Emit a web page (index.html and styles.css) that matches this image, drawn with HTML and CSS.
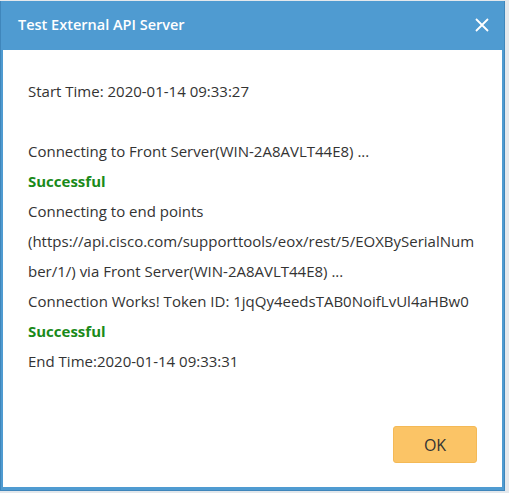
FILE: index.html
```html
<!DOCTYPE html>
<html>
<head>
<meta charset="utf-8">
<link rel="stylesheet" href="styles.css">
</head>
<body>
<div class="dialog">
  <div class="dialog-header">
    <span class="dialog-title">Test External API Server</span>
    <svg class="close" width="14" height="14" viewBox="0 0 14 14"><path d="M1 1L13 13M13 1L1 13" stroke="#fff" stroke-width="1.8" fill="none"/></svg>
  </div>
  <div class="dialog-body">
    <div class="log">
      <div class="line">Start Time: 2020-01-14 09:33:27</div>
      <div class="line">&nbsp;</div>
      <div class="line">Connecting to Front Server(WIN-2A8AVLT44E8) ...</div>
      <div class="line ok">Successful</div>
      <div class="line">Connecting to end points (https://api.cisco.com/supporttools/eox/rest/5/EOXBySerialNumber/1/) via Front Server(WIN-2A8AVLT44E8) ...</div>
      <div class="line">Connection Works! Token ID: 1jqQy4eedsTAB0NoifLvUl4aHBw0</div>
      <div class="line ok">Successful</div>
      <div class="line">End Time:2020-01-14 09:33:31</div>
    </div>
    <div class="actions">
      <button class="btn-ok">OK</button>
    </div>
  </div>
</div>
</body>
</html>
```
FILE: styles.css
```css
html, body {
  margin: 0;
  padding: 0;
}
body {
  background: #e4e8ec;
  width: 509px;
  height: 493px;
  overflow: hidden;
  font-family: "Open Sans", "Liberation Sans", sans-serif;
}
.dialog {
  box-sizing: border-box;
  width: 505px;
  height: 490px;
  margin-top: 1px;
  background: #4f9bd1;
  border: 1px solid #3f86bb;
  border-top: none;
  padding: 0 2px 3px 2px;
  display: flex;
  flex-direction: column;
}
.dialog-header {
  height: 49px;
  display: flex;
  align-items: center;
  justify-content: space-between;
  padding: 0 13px 0 15px;
  flex-shrink: 0;
}
.dialog-title {
  color: #fff;
  font-size: 14.5px;
  font-weight: 600;
  margin-top: -2px;
}
.close {
  margin-top: -2px;
}
.dialog-body {
  flex: 1;
  background: #fff;
  padding: 26px 24px 0 25px;
  display: flex;
  flex-direction: column;
}
.log {
  color: #333;
  font-size: 15px;
  line-height: 30px;
  overflow-wrap: break-word;
  flex: 1;
}
.ok {
  color: #1a8a1a;
  font-weight: 700;
}
.actions {
  display: flex;
  justify-content: flex-end;
  padding-bottom: 24px;
}
.btn-ok {
  width: 84px;
  height: 37px;
  background: #fbc466;
  border: 1px solid #f4b956;
  border-radius: 3px;
  color: #333;
  font-family: "Open Sans", "Liberation Sans", sans-serif;
  font-size: 16px;
  margin-right: 1px;
}
```
